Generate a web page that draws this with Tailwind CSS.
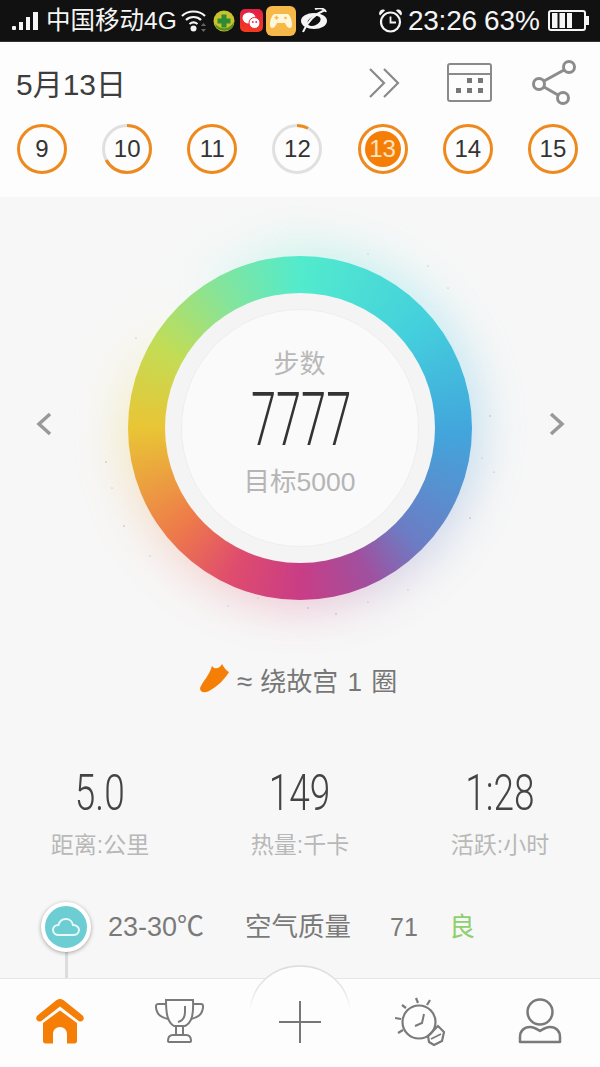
<!DOCTYPE html>
<html lang="zh">
<head>
<meta charset="utf-8">
<script src="https://cdn.jsdelivr.net/npm/@tailwindcss/browser@4"></script>
</head>
<body class="m-0">
<div class="w-[600px] h-[1067px] flex flex-col overflow-hidden bg-[#f7f7f7] text-[#444] font-['Liberation_Sans','Noto_Sans_CJK_SC',sans-serif]">

  <!-- status bar -->
  <div class="h-[42px] shrink-0 bg-[#111] border-b border-[#333] text-[#f5f5f5] flex items-center justify-between pl-[11px] pr-[11px]">
    <div class="flex items-center">
      <svg class="w-[28px] h-[20px]" viewBox="0 0 28 20" fill="#f5f5f5"><rect x="1" y="15" width="4" height="4" rx="1"/><rect x="8" y="11" width="4" height="8"/><rect x="15" y="6" width="4" height="13"/><rect x="22" y="1" width="5" height="18"/></svg>
      <span class="ml-[7px] text-[24.500px] leading-[30px] whitespace-nowrap">中国移动4G</span>
      <svg class="ml-[3px] w-[28px] h-[24px]" viewBox="0 0 28 24" fill="none" stroke="#f5f5f5" stroke-width="2.200"><path d="M2 7 C8 1 19 1 25 7"/><path d="M6 11 C10 7 17 7 21 11"/><path d="M9.500 15 C12 13 15 13 17.500 15"/><circle cx="13.500" cy="19.500" r="3" fill="#f5f5f5" stroke="none"/><path d="M21 17 l2.500 -3 l2.500 3z M21 20 l2.500 3 l2.500 -3z" fill="#666" stroke="none"/></svg>
      <svg class="ml-[5px] w-[22px] h-[22px]" viewBox="0 0 22 22"><circle cx="11" cy="11" r="10.500" fill="#c9c22c"/><path d="M2 14 C8 20 16 20 21 12 L20 17 C16 22 7 22 3 17z" fill="#5a8f22"/><path d="M8.500 4.500h5v4h4v5h-4v4h-5v-4h-4v-5h4z" fill="#2f8a34"/></svg>
      <div class="ml-[5px] w-[23px] h-[23px] rounded-[5px] bg-[linear-gradient(#e0204a,#f63a1c)] flex items-center justify-center">
        <svg class="w-[19px] h-[19px]" viewBox="0 0 19 19" fill="#fff"><ellipse cx="7" cy="7" rx="6.500" ry="5.500"/><circle cx="12.500" cy="12" r="5.500" stroke="#e8243c"/><circle cx="10.800" cy="11" r=".9" fill="#e8243c"/><circle cx="14.200" cy="11" r=".9" fill="#e8243c"/></svg>
      </div>
      <div class="ml-[3px] w-[30px] h-[30px] rounded-[6px] bg-[#f7b84a] flex items-center justify-center">
        <svg class="w-[24px] h-[18px]" viewBox="0 0 24 18" fill="#fff6dc"><path d="M6 2 H18 C21 2 23 8 23 13 C23 17 19 17 17 13 L16 11 H8 L7 13 C5 17 1 17 1 13 C1 8 3 2 6 2z"/><rect x="5.500" y="5" width="4" height="1.500" fill="#f7b84a"/><rect x="6.800" y="3.700" width="1.500" height="4" fill="#f7b84a"/><circle cx="16.500" cy="6" r="1.300" fill="#f7b84a"/></svg>
      </div>
      <svg class="ml-[4px] w-[28px] h-[26px]" viewBox="0 0 28 26" fill="none"><ellipse cx="14" cy="13" rx="13" ry="8" fill="#f5f5f5"/><ellipse cx="14" cy="13" rx="7" ry="4.500" fill="#111" transform="rotate(-25 14 13)"/><path d="M3 24 C7 14 15 6 25 2" stroke="#f5f5f5" stroke-width="2"/><path d="M15 1 C20 -1 25 1 26 4" stroke="#f5f5f5" stroke-width="2"/></svg>
    </div>
    <div class="flex items-center">
      <svg class="w-[25px] h-[25px]" viewBox="0 0 25 25" fill="none" stroke="#f5f5f5" stroke-width="2.200"><circle cx="12.500" cy="14" r="9.500"/><path d="M12.500 8.500 V14.500 H18" stroke-width="1.800"/><path d="M1 6 C1 3 3 1 6 1.500 L7 2.500 L2 7.500z M24 6 C24 3 22 1 19 1.500 L18 2.500 L23 7.500z" fill="#f5f5f5" stroke="none"/></svg>
      <span class="ml-[5px] text-[28px] leading-[30px] tracking-[-0.2px] whitespace-nowrap">23:26</span>
      <span class="ml-[7px] text-[28px] leading-[30px] whitespace-nowrap">63%</span>
      <svg class="ml-[8px] w-[41px] h-[21px]" viewBox="0 0 41 21" fill="none"><rect x="1" y="1" width="36" height="19" rx="2" stroke="#f5f5f5" stroke-width="2"/><rect x="38" y="6" width="3" height="9" fill="#f5f5f5"/><path d="M4 3v15h5.500V3z M11.500 3v15H17V3z M19 3v15h5V3z" fill="#f5f5f5"/></svg>
    </div>
  </div>

  <!-- header -->
  <div class="h-[155px] shrink-0 bg-[#fdfdfd] flex flex-col">
    <div class="h-[82px] flex items-center justify-between pl-[16px] pr-[22px]">
      <span class="mt-[4px] text-[30px] leading-[36px] text-[#3d3d3d] whitespace-nowrap">5月13日</span>
      <div class="flex items-center">
        <svg class="w-[32px] h-[32px]" viewBox="0 0 32 32" fill="none" stroke="#8a8a8a" stroke-width="2.200"><path d="M2 2 L16 16 L2 30"/><path d="M16 2 L30 16 L16 30"/></svg>
        <svg class="ml-[47px] w-[45px] h-[40px]" viewBox="0 0 45 40" fill="none"><rect x="1" y="1" width="43" height="37" rx="2" stroke="#8a8a8a" stroke-width="2"/><path d="M1 11 H44" stroke="#8a8a8a" stroke-width="2"/><g fill="#777"><rect x="20" y="15" width="5" height="5"/><rect x="31" y="15" width="5" height="5"/><rect x="9" y="25" width="5" height="5"/><rect x="20" y="25" width="5" height="5"/><rect x="31" y="25" width="5" height="5"/></g></svg>
        <svg class="ml-[40px] w-[46px] h-[46px]" viewBox="0 0 46 46" fill="none" stroke="#8c8c8c" stroke-width="3"><circle cx="37" cy="7" r="5.500"/><circle cx="7" cy="24" r="5.500"/><circle cx="31" cy="38" r="5.500"/><path d="M12 21 L32 10"/><path d="M12 27 L26 35"/></svg>
      </div>
    </div>
    <div class="flex items-center justify-between pl-[17px] pr-[22px] text-[24px] text-[#333]">
      <div class="relative size-[50px] flex items-center justify-center"><svg class="absolute inset-0" viewBox="0 0 50 50" fill="none"><circle cx="25" cy="25" r="23.500" stroke="#ee8a1d" stroke-width="3"/></svg><span>9</span></div>
      <div class="relative size-[50px] flex items-center justify-center"><svg class="absolute inset-0 -rotate-90" viewBox="0 0 50 50" fill="none"><circle cx="25" cy="25" r="23.500" stroke="#e0e0e0" stroke-width="3"/><circle cx="25" cy="25" r="23.500" stroke="#ee8a1d" stroke-width="3" pathLength="360" stroke-dasharray="242 360"/></svg><span>10</span></div>
      <div class="relative size-[50px] flex items-center justify-center"><svg class="absolute inset-0" viewBox="0 0 50 50" fill="none"><circle cx="25" cy="25" r="23.500" stroke="#ee8a1d" stroke-width="3"/></svg><span>11</span></div>
      <div class="relative size-[50px] flex items-center justify-center"><svg class="absolute inset-0 -rotate-90" viewBox="0 0 50 50" fill="none"><circle cx="25" cy="25" r="23.500" stroke="#e0e0e0" stroke-width="3"/><circle cx="25" cy="25" r="23.500" stroke="#ee8a1d" stroke-width="3" pathLength="360" stroke-dasharray="28 360"/></svg><span>12</span></div>
      <div class="relative size-[50px] flex items-center justify-center"><svg class="absolute inset-0" viewBox="0 0 50 50" fill="none"><circle cx="25" cy="25" r="23.500" stroke="#ee8a1d" stroke-width="3"/><circle cx="25" cy="25" r="18" fill="#f57f06"/></svg><span class="relative text-[#fde3c4]">13</span></div>
      <div class="relative size-[50px] flex items-center justify-center"><svg class="absolute inset-0" viewBox="0 0 50 50" fill="none"><circle cx="25" cy="25" r="23.500" stroke="#ee8a1d" stroke-width="3"/></svg><span>14</span></div>
      <div class="relative size-[50px] flex items-center justify-center"><svg class="absolute inset-0" viewBox="0 0 50 50" fill="none"><circle cx="25" cy="25" r="23.500" stroke="#ee8a1d" stroke-width="3"/></svg><span>15</span></div>
    </div>
  </div>

  <!-- main -->
  <div class="flex-1 min-h-0 flex flex-col">
    <div class="mt-[59px] flex items-center justify-between pl-[36px] pr-[35px]">
      <svg class="w-[16px] h-[24px] mb-[8px]" viewBox="0 0 16 24" fill="none" stroke="#999" stroke-width="3.500"><path d="M14 2 L3 12 L14 22"/></svg>
      <div class="relative size-[344px] -translate-x-[1px]">
        <div class="absolute inset-[-8px] rounded-full blur-[24px] opacity-30 bg-[conic-gradient(#52eacb,#4ad4ea_45deg,#42a5dc_90deg,#6c7cc4_135deg,#d8487f_180deg,#f08a70_225deg,#e8d040_270deg,#ffffff_315deg,#52eacb)]"></div>
        <svg class="absolute inset-[-30px] size-[404px]" viewBox="0 0 404 404" fill="#a9a9a9"><circle cx="8" cy="236" r=".7"/><circle cx="14" cy="262" r=".6"/><circle cx="26" cy="300" r=".7"/><circle cx="52" cy="330" r=".6"/><circle cx="38" cy="112" r=".6"/><circle cx="392" cy="190" r=".7"/><circle cx="384" cy="232" r=".6"/><circle cx="396" cy="246" r=".6"/><circle cx="372" cy="292" r=".7"/><circle cx="350" cy="62" r=".6"/><circle cx="330" cy="40" r=".6"/><circle cx="270" cy="28" r=".5"/><circle cx="210" cy="382" r=".7"/><circle cx="238" cy="388" r=".7"/><circle cx="270" cy="376" r=".6"/><circle cx="160" cy="372" r=".6"/><circle cx="130" cy="380" r=".5"/><circle cx="310" cy="364" r=".6"/></svg>
        <div class="absolute inset-0 rounded-full bg-[conic-gradient(#52ebcd,#44cfdd_50deg,#42a5dc_92deg,#6c7cc4_135deg,#a0509f_155deg,#c93d85_180deg,#df4c6e_205deg,#ee7a4a_230deg,#e9c535_270deg,#c3dc55_300deg,#85e49a_330deg,#52ebcd)]"></div>
        <div class="absolute inset-[37px] rounded-full bg-[#f4f4f4] flex items-center justify-center">
          <div class="size-[238px] rounded-full bg-[#fafafa] border border-[#eeeeee] flex flex-col items-center">
            <span class="mt-[37px] text-[26px] leading-[34px] text-[#b8b8b8]">步数</span>
            <span class="mt-[11px] ml-[3px] h-[56px] font-['Roboto'] font-light text-[74px] leading-[56px] text-[#333] scale-x-[0.61] whitespace-nowrap">7777</span>
            <span class="mt-[17px] text-[26.500px] leading-[34px] text-[#b5b5b5] whitespace-nowrap">目标5000</span>
          </div>
        </div>
      </div>
      <svg class="w-[16px] h-[24px] mb-[8px]" viewBox="0 0 16 24" fill="none" stroke="#999" stroke-width="3.500"><path d="M2 2 L13 12 L2 22"/></svg>
    </div>

    <div class="mt-[64px] h-[36px] flex items-center justify-center pr-[4px] text-[#777]">
      <svg class="w-[31px] h-[30px] mb-[8px]" viewBox="0 0 31 30" fill="#f57f06"><path d="M1 25 C4 18 10 13 13 3 L15 5 C18 6 21 5 23 1 C25 5 28 8 30 9 C26 16 18 24 10 28 C6 30 1 30 1 25z"/></svg>
      <span class="ml-[7px] text-[28px] leading-[34px]">≈</span>
      <span class="ml-[8px] text-[26px] leading-[34px] [word-spacing:2px] whitespace-nowrap">绕故宫 1 圈</span>
    </div>

    <div class="mt-[67px] grid grid-cols-3">
      <div class="flex flex-col items-center">
        <span class="h-[52px] font-['Roboto'] font-light text-[50px] leading-[52px] text-[#444] scale-x-[0.74] whitespace-nowrap">5.0</span>
        <span class="mt-[11px] text-[23px] leading-[30px] text-[#b8b8b8] whitespace-nowrap">距离:公里</span>
      </div>
      <div class="flex flex-col items-center">
        <span class="h-[52px] font-['Roboto'] font-light text-[50px] leading-[52px] text-[#444] scale-x-[0.74] whitespace-nowrap">149</span>
        <span class="mt-[11px] text-[23px] leading-[30px] text-[#b8b8b8] whitespace-nowrap">热量:千卡</span>
      </div>
      <div class="flex flex-col items-center">
        <span class="h-[52px] font-['Roboto'] font-light text-[50px] leading-[52px] text-[#444] scale-x-[0.74] whitespace-nowrap">1:28</span>
        <span class="mt-[11px] text-[23px] leading-[30px] text-[#b8b8b8] whitespace-nowrap">活跃:小时</span>
      </div>
    </div>

    <div class="flex-1 relative pl-[41px] pt-[42px] flex items-start">
      <div class="absolute left-[65px] top-[82px] bottom-0 w-[3px] bg-[#dcdcdc]"></div>
      <div class="relative size-[50px] rounded-full bg-[#6ccdd3] border-[4px] border-white shadow-[0_1px_4px_rgba(0,0,0,0.35)] flex items-center justify-center">
        <svg class="w-[28px] h-[20px]" viewBox="0 0 28 20" fill="none" stroke="#e8f8f8" stroke-width="2"><path d="M7 18 C3 18 1 15.500 1 13 C1 10 3.500 8 6.500 8 C7.500 4 10.500 2 14 2 C18 2 20.500 5 21 8 C24.500 8 27 10.500 27 13 C27 16 24.500 18 21 18z"/></svg>
      </div>
      <span class="ml-[17px] mt-[8px] text-[27px] leading-[34px] text-[#7a7a7a] whitespace-nowrap">23-30℃</span>
      <span class="ml-[41px] mt-[8px] text-[26.500px] leading-[34px] text-[#7a7a7a] whitespace-nowrap">空气质量</span>
      <span class="ml-[39px] mt-[8px] text-[25px] leading-[34px] text-[#7a7a7a]">71</span>
      <span class="ml-[31px] mt-[8px] text-[26px] leading-[34px] text-[#8fcf70]">良</span>
    </div>
  </div>

  <!-- bottom nav -->
  <div class="relative h-[89px] shrink-0 bg-[#fdfdfd] border-t border-[#e6e6e6] grid grid-cols-5 items-center">
    <svg class="absolute left-[245px] top-[-14px] w-[110px] h-[50px]" viewBox="0 0 110 50" fill="none"><defs><linearGradient id="arc" x1="0" y1="0" x2="0" y2="1"><stop offset="0" stop-color="#dcdcdc"/><stop offset=".55" stop-color="#e6e6e6"/><stop offset="1" stop-color="#fdfdfd"/></linearGradient></defs><path d="M5 46 C7 20 28 1 55 1 C82 1 103 20 105 46 L100 46 V16 H10 V46z" fill="#fdfdfd"/><path d="M5 46 C7 20 28 1 55 1 C82 1 103 20 105 46" stroke="url(#arc)" stroke-width="1.500"/></svg>
    <div class="flex justify-center">
      <svg class="w-[50px] h-[45px] mb-[4px]" viewBox="0 0 50 45" fill="#f57f06"><path d="M25 0 C26.500 0 27.500 .5 29 1.500 L47 16 C50 18.500 49 22 46 22.500 C44.500 22.700 44 22.300 43 21.500 L25 7.500 L7 21.500 C6 22.300 5.500 22.700 4 22.500 C1 22 0 18.500 3 16 L21 1.500 C22.500 .5 23.500 0 25 0z"/><path d="M25 11.500 L42 24 V42 C42 43.500 41 44.500 39.500 44.500 H32 V35 C32 31 29 28 25 28 C21 28 18 31 18 35 V44.500 H10.500 C9 44.500 8 43.500 8 42 V24z"/></svg>
    </div>
    <div class="flex justify-center">
      <svg class="w-[50px] h-[46px] mb-[4px]" viewBox="0 0 50 46" fill="none" stroke="#7a7a7a" stroke-width="2"><path d="M11 2 H38 C38.500 14 38 24 30 28 H19 C12 24 11 14 11 2z"/><path d="M11 6 H3 C0 6 1 10 1.500 12 C3 18 8 20 13 21"/><path d="M38 6 H46 C49 6 48 10 47.500 12 C46 18 41 20 36 21"/><path d="M30 8 V14 C30 20 27 23 23 24"/><path d="M21 28 V37 M28 28 V37"/><path d="M18 37 H31 C34 37 36 39 36 43 C36 44 35 44 34 44 H15 C14 44 13 44 13 43 C13 39 15 37 18 37z"/></svg>
    </div>
    <div class="flex justify-center">
      <svg class="w-[42px] h-[42px] mb-[3px]" viewBox="0 0 42 42" stroke="#777" stroke-width="2"><path d="M21 0 V42 M0 21 H42"/></svg>
    </div>
    <div class="flex justify-center">
      <svg class="w-[50px] h-[50px] mb-[3px]" viewBox="0 0 50 50" fill="none" stroke="#7a7a7a" stroke-width="2.200"><circle cx="24" cy="25" r="16.500"/><path d="M21 1 L23 6 M7 8 L11 11 M35 3 L32 8 M0 21 L6 22 M3 36 L8 33"/><path d="M29 17 L27 26 L20 29" stroke-width="2"/><path d="M36 36 L43 29 L49 35 L47 44 L39 48 L34 45 L33 39z"/><path d="M36 42 L46 37" stroke-width="1.800"/></svg>
    </div>
    <div class="flex justify-center">
      <svg class="w-[44px] h-[46px] mb-[4px]" viewBox="0 0 44 46" fill="none" stroke="#7a7a7a" stroke-width="2.500"><circle cx="22" cy="14" r="12.500"/><path d="M2 44 V39 C2 33 6 29 12 29 C16 29 19 31 22 33 C25 31 28 29 32 29 C38 29 42 33 42 39 V44z" stroke-linejoin="round"/></svg>
    </div>
  </div>
</div>
</body>
</html>
